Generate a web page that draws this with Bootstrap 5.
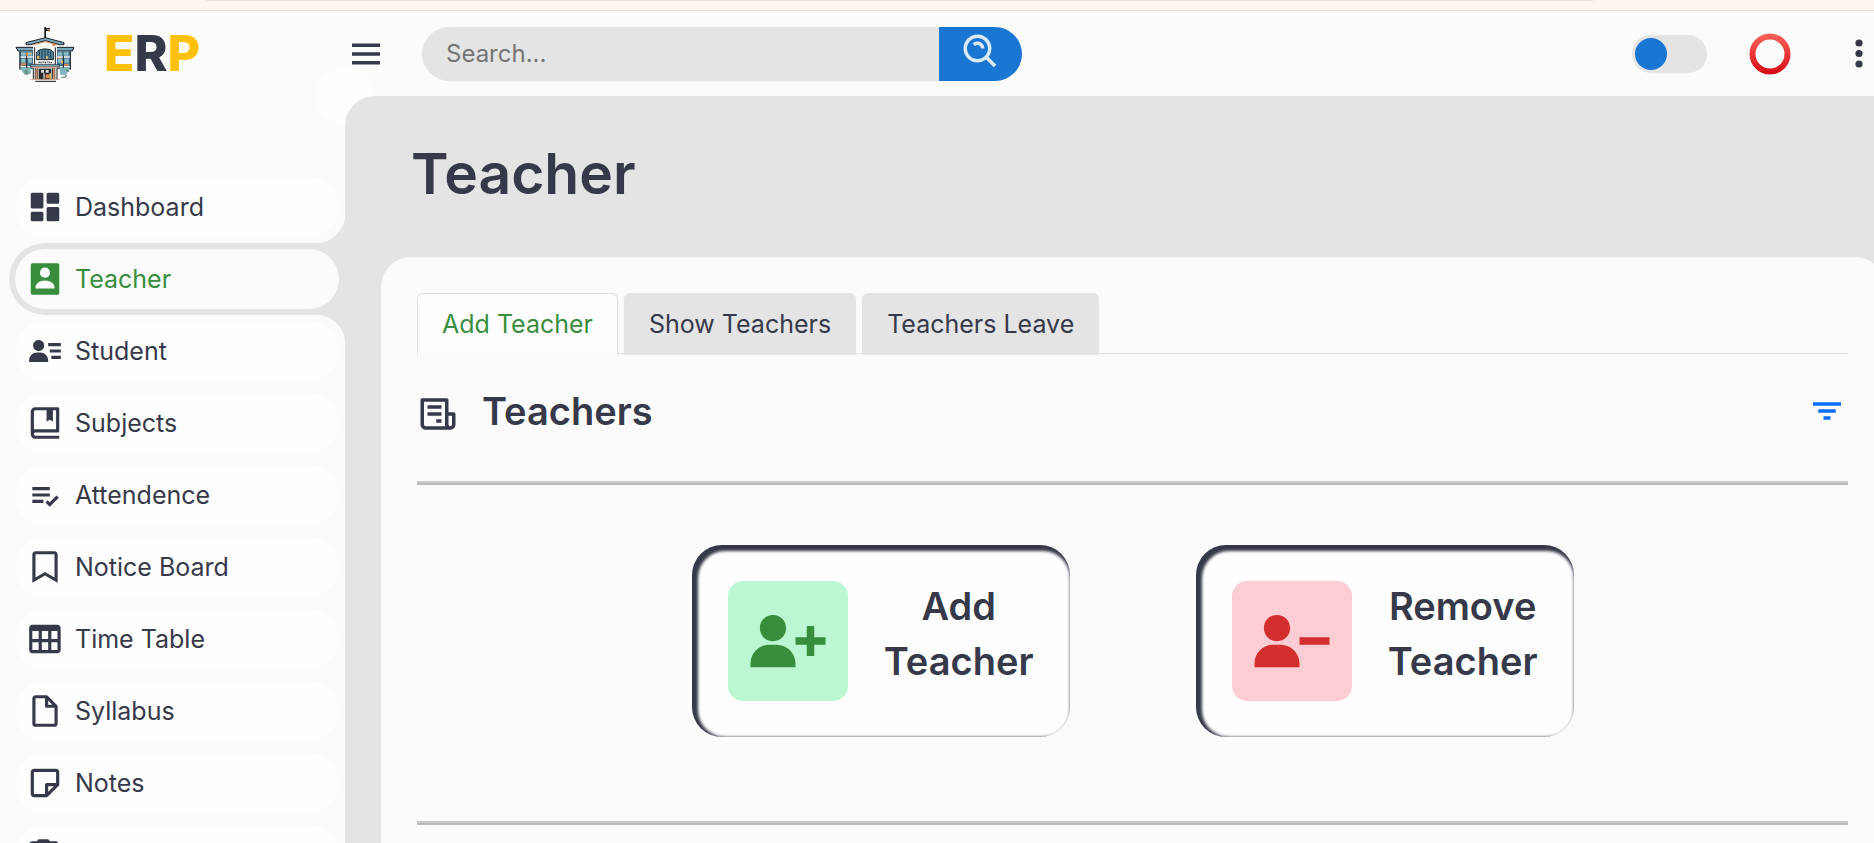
<!DOCTYPE html>
<html lang="en">
<head>
<meta charset="utf-8">
<meta name="viewport" content="width=device-width, initial-scale=1">
<title>ERP - Teacher</title>
<link href="https://cdn.jsdelivr.net/npm/bootstrap@5.3.0/dist/css/bootstrap.min.css" rel="stylesheet">
<style>
:root { --ink: #363949; --panel: #fbfbfb; --canvas: #e4e4e4; --go: #388e3c; --stop: #d32f2f; --blue: #1976d2; }
body { font-family: Inter, "Open Sans", sans-serif; font-size: 25px; line-height: 36px; color: var(--ink); background: var(--panel); }
svg { fill: currentColor; display: block; }
.top-strip { height: 11px; background: #fff6f2; border-bottom: 1px solid #f3dfd0; }
.top-strip hr { width: 74%; height: 1px; margin: 0 0 0 11%; border: 0; background: #eee0dd; opacity: 1; }
.icon-m { width: 38px; height: 38px; flex: none; }
.icon-l { width: 42px; height: 42px; flex: none; }

.sidebar { width: 345px; background: var(--panel); }
.brand { height: 85px; padding: 0 0 2px 10px; gap: 24px; color: var(--ink); }
.brand-name { font-size: 50px; font-weight: 800; line-height: 60px; }
.brand-name span { color: #ffc107; }
.side-menu { margin-top: 75px; }
.side-item { position: relative; height: 72px; margin-left: 9px; padding: 6px; border-radius: 36px 0 0 36px; }
.side-item a { height: 60px; padding-left: 11px; gap: 11px; border-radius: 30px; background: #fefefe; color: var(--ink); }
.side-item.current { background: var(--canvas); }
.side-item.current a { background: var(--panel); color: var(--go); }
/* Curved joins between the current item and the canvas */
.side-item.current::before, .side-item.current::after { content: ""; position: absolute; right: 0; width: 30px; height: 30px; }
.side-item.current::before { bottom: 100%; background: radial-gradient(circle at 0 0, transparent 30px, var(--canvas) 31px); }
.side-item.current::after { top: 100%; background: radial-gradient(circle at 0 100%, transparent 30px, var(--canvas) 31px); }

.main-area { background: var(--canvas); min-width: 0; }
.topbar { position: relative; height: 85px; background: var(--panel); padding-right: 11px; }
.topbar::before { content: ""; position: absolute; left: 0; bottom: -60px; width: 60px; height: 60px; border-radius: 50%; box-shadow: -30px -30px 0 #fdfdfd; }
.plain-btn { border: 0; padding: 0; background: none; color: inherit; }
.search-box { width: 600px; height: 54px; margin-left: 35px; }
.search-box input { border: 0; border-radius: 27px 0 0 27px; background: var(--canvas); padding: 0 24px; font-size: 24px; color: var(--ink); }
.search-box input::placeholder { color: #757575; }
.search-box button { width: 83px; border: 0; border-radius: 0 27px 27px 0; background: var(--blue); color: #dce9f7; }
.mode-switch { appearance: none; width: 75px; height: 38px; margin: 0 42px 0 0; padding: 3px; border-radius: 19px; background: var(--canvas); }
.mode-switch::before { content: ""; display: block; width: 32px; height: 32px; border-radius: 50%; background: var(--blue); }
.more-btn { margin-left: 64px; }

.page-head { padding: 48px 36px 53px 66px; }
.page-head h1 { font-size: 57px; font-weight: 600; line-height: 60px; }
.sheet { margin: 0 -11px 0 36px; padding: 36px 37px 0 36px; border-radius: 30px 30px 0 0; background: var(--panel); }
.sheet .nav-tabs { gap: 6px; height: 61px; border-bottom: 1px solid #dedfe0; }
.sheet .nav-link { height: 62px; padding: 12px 24px; border: 1px solid var(--canvas); border-radius: 6px 6px 0 0; background: var(--canvas); color: var(--ink); }
.sheet .nav-link.active { background: #fefefe; border-color: #dedfe0 #dedfe0 #fefefe; color: var(--go); }
.section-head { height: 127px; padding-bottom: 14px; gap: 23px; }
.section-head h2 { font-size: 38px; font-weight: 600; line-height: 54px; }
.section-head .sheet-icon { margin-top: 6px; }
.rule { height: 4px; margin: 0; border: 0; border-top: 2px solid #c9c9cc; background: #bababb; opacity: 1; }
.action-row { gap: 126px; padding: 60px 0 84px; }
.action-card { width: 378px; height: 192px; padding: 0 36px; border: 0; border-radius: 30px; background: #fefefe; color: var(--ink); box-shadow: inset 3px 3px 3px 3px var(--ink); }
.action-icon { width: 120px; height: 120px; border-radius: 15px; }
.action-icon svg { width: 90px; height: 90px; }
.action-icon.add { background: #bbf7d3; color: var(--go); }
.action-icon.drop { background: #fecdd3; color: var(--stop); }
.action-text { font-size: 38px; font-weight: 600; line-height: 55px; padding-bottom: 14px; }
</style>
</head>
<body class="vh-100 overflow-hidden d-flex flex-column">
<svg width="0" height="0" class="position-absolute" aria-hidden="true">
  <symbol id="i-dash" viewBox="0 0 24 24"><path d="M4 13h6a1 1 0 0 0 1-1V4a1 1 0 0 0-1-1H4a1 1 0 0 0-1 1v8a1 1 0 0 0 1 1zm-1 7a1 1 0 0 0 1 1h6a1 1 0 0 0 1-1v-4a1 1 0 0 0-1-1H4a1 1 0 0 0-1 1v4zm10 0a1 1 0 0 0 1 1h6a1 1 0 0 0 1-1v-7a1 1 0 0 0-1-1h-6a1 1 0 0 0-1 1v7zm1-10h6a1 1 0 0 0 1-1V4a1 1 0 0 0-1-1h-6a1 1 0 0 0-1 1v5a1 1 0 0 0 1 1z"/></symbol>
  <symbol id="i-teacher" viewBox="0 0 24 24"><rect x="3" y="2" width="18" height="20" rx="1.2"/><circle cx="12" cy="8" r="3.2" fill="#fff"/><path fill="#fff" d="M6 18v-.6C6 15 8.700 13 12 13s6 2 6 4.400v.6z"/></symbol>
  <symbol id="i-student" viewBox="0 0 24 24"><path d="M15 11h7v2h-7zm1 4h6v2h-6zm-2-8h8v2h-8zM4 19h10v-1c0-2.757-2.243-5-5-5H7c-2.757 0-5 2.243-5 5v1h2zm4-7c1.995 0 3.500-1.505 3.500-3.500S9.995 5 8 5 4.500 6.505 4.500 8.500 6.005 12 8 12z"/></symbol>
  <symbol id="i-book" viewBox="0 0 24 24"><path d="M20 2H6C4.300 2 3 3.300 3 5v14c0 1.700 1.300 3 3 3h15v-2H6c-.6 0-1-.4-1-1s.4-1 1-1h14a1 1 0 0 0 1-1V3a1 1 0 0 0-1-1zm-1 14H5V5c0-.6.4-1 1-1h7v7l2-1 2 1V4h2z"/></symbol>
  <symbol id="i-check" viewBox="0 0 24 24"><path d="M4 7h11v2H4zm0 4h11v2H4zm0 4h7v2H4zm15.299-2.708-4.300 4.291-1.292-1.291-1.414 1.415 2.706 2.704 5.712-5.703z"/></symbol>
  <symbol id="i-mark" viewBox="0 0 24 24"><path d="M18 2H6c-1.103 0-2 .897-2 2v18l8-4.572L20 22V4c0-1.103-.897-2-2-2zm0 16.553-6-3.428-6 3.428V4h12v14.553z"/></symbol>
  <symbol id="i-table" viewBox="0 0 24 24"><path d="M4 21h15.893c1.103 0 2-.897 2-2V5c0-1.103-.897-2-2-2H4c-1.103 0-2 .897-2 2v14c0 1.103.897 2 2 2zm0-2v-5h4v5H4zM14 7v5h-4V7h4zM8 7v5H4V7h4zm2 12v-5h4v5h-4zm6 0v-5h3.894v5H16zm3.893-7H16V7h3.893v5z"/></symbol>
  <symbol id="i-file" viewBox="0 0 24 24"><path d="M19.708 8.293l-6-6A1 1 0 0 0 13 2H6c-1.103 0-2 .897-2 2v16c0 1.103.897 2 2 2h12c1.103 0 2-.897 2-2V9a1 1 0 0 0-.292-.707zM16.586 8H14V5.414L16.586 8zM6 20V4h6v5a1 1 0 0 0 1 1h5v10H6z"/></symbol>
  <symbol id="i-note" viewBox="0 0 24 24"><path d="M19 3H5c-1.100 0-2 .9-2 2v14c0 1.100.9 2 2 2h8a1 1 0 0 0 .71-.29l7-7A1 1 0 0 0 21 13V5c0-1.100-.9-2-2-2zM5 5h14v7h-6a1 1 0 0 0-1 1v6H5zm9 12.590V14h3.590z"/></symbol>
  <symbol id="i-clip" viewBox="0 0 24 24"><path d="M19 3.300h-4A1.500 1.500 0 0 0 13.500 2h-5A1.500 1.500 0 0 0 7 3.300H4c-1 0-1.800.7-1.800 1.700v15c0 1.100.9 2 2 2h14c1.100 0 2-.9 2-2V5c0-1-.4-1.700-1.200-1.700zM18 20H4.500V7H18z"/></symbol>
</svg>

<div class="top-strip flex-shrink-0"><hr></div>
<div class="d-flex flex-grow-1 overflow-hidden">

  <aside class="sidebar flex-shrink-0">
    <a href="#" class="brand d-flex align-items-center text-decoration-none">
      <svg width="70" height="66" viewBox="0 0 210 198" role="img" aria-label="School">
        <path d="M26 82h158v74l-30 24H56l-30-24z" fill="#fff"/>
        <path d="M103 21h5v34h-5z" fill="#151515"/><path d="M108 24h12v9h-12z" fill="#222"/><path d="M111 27h5v3h-5z" fill="#8fc1d0"/><path d="M116 28h4v7h-4z" fill="#e8894e"/>
        <path d="M18 82h56l-4 11H24zM136 82h56l-5 11h-51z" fill="#79a8bb" stroke="#191b20" stroke-width="3"/>
        <path d="M28 94h46v54H28zM137 94h46v54h-46z" fill="#4c7d96"/>
        <path d="M33 97h14v10H33zM53 97h13v10H53zM143 97h13v10h-13zM162 97h14v10h-14zM33 116h13v12H33zM54 116h12v12H54zM144 116h13v12h-13zM164 116h12v12h-12z" fill="#86bac4"/>
        <path d="M48 98h6v16h-6zM143 112h12v4h-12zM33 130h15v5H33zM162 132h14v5h-14z" fill="#e08a4d"/>
        <path d="M31 136h6v14h-6zM55 99h7v4h-7zM154 121h5v10h-5zM162 146h7v12h-7z" fill="#eac466"/>
        <path d="M30 109h42v4H30zM138 109h43v4h-43z" fill="#f3f3f3"/>
        <path d="M30 138h42v4H30zM138 138h43v4h-43z" fill="#eee"/>
        <path d="M28 142h34v20H42zM150 142h32l-14 22h-18z" fill="#7fb4be"/><path d="M44 150h10v14H44zM170 148h7v8h-7z" fill="#68927d"/>
        <path d="M30 94v55M181 94v55M70 94v50M140 94v50M50 107v37M160 107v37" stroke="#1b1d24" stroke-width="3" fill="none"/>
        <path d="M69 60h72v85H69z" fill="#fdfdfd"/>
        <path d="M106 53 48 68v6h14l44-12 42 12h14v-6z" fill="#79a8bb" stroke="#191b20" stroke-width="3"/>
        <path d="M70 74l36-9 35 9" stroke="#d98657" stroke-width="3" fill="none"/><path d="M128 72h8v6h-8z" fill="#e78549"/>
        <path d="M80 119V96c8-12 43-12 50 0v23z" fill="#548fa4" stroke="#20232a" stroke-width="3"/>
        <path d="M88 92v24M96 88v28M105 86v30M114 88v28M122 92v24" stroke="#25313a" stroke-width="3"/>
        <path d="M82 108h6v9h-6zM108 108h5v9h-5z" fill="#eac466"/>
        <path d="M74 82v54M136 82v54" stroke="#1b1d24" stroke-width="3"/>
        <path d="M83 122h45v10H83z" fill="#fff"/><path d="M85 127h5m3-2v5m4-4h6m3-1v5m4-4h5m3-1v5m4-2h4" stroke="#252525" stroke-width="3"/>
        <path d="M62 133h86v8H62z" fill="#7ca7bb" stroke="#1b1d24" stroke-width="2"/><path d="M65 140h80v3H65z" fill="#d7835a"/>
        <path d="M68 143h74v35H68z" fill="#e8e5df"/>
        <path d="M70 144v34M76 144v34M82 144v34M128 144v34M134 144v34M141 144v34" stroke="#282a30" stroke-width="3"/>
        <path d="M77 144h5v32h-5zM129 144h5v32h-5z" fill="#d99162"/>
        <path d="M86 146h38v32H86z" fill="#252a31"/><path d="M93 150h9v8h-9zM107 150h9v8h-9zM100 160h4v16h-4z" fill="#d8dddc"/><path d="M107 163h10v12h-10z" fill="#e08a4d"/><path d="M118 160h5v16h-5z" fill="#eac466"/>
        <path d="M60 178h90" stroke="#d28a63" stroke-width="2"/><path d="M154 172h10l6-7" stroke="#68927d" stroke-width="4" fill="none"/>
        <path d="M76 184h62" stroke="#15161a" stroke-width="3"/>
      </svg>
      <div class="brand-name"><span>E</span>R<span>P</span></div>
    </a>
    <ul class="side-menu list-unstyled">
      <li class="side-item"><a href="#" class="d-flex align-items-center text-decoration-none"><svg class="icon-m"><use href="#i-dash"/></svg>Dashboard</a></li>
      <li class="side-item current"><a href="#" aria-current="page" class="d-flex align-items-center text-decoration-none"><svg class="icon-m"><use href="#i-teacher"/></svg>Teacher</a></li>
      <li class="side-item"><a href="#" class="d-flex align-items-center text-decoration-none"><svg class="icon-m"><use href="#i-student"/></svg>Student</a></li>
      <li class="side-item"><a href="#" class="d-flex align-items-center text-decoration-none"><svg class="icon-m"><use href="#i-book"/></svg>Subjects</a></li>
      <li class="side-item"><a href="#" class="d-flex align-items-center text-decoration-none"><svg class="icon-m"><use href="#i-check"/></svg>Attendence</a></li>
      <li class="side-item"><a href="#" class="d-flex align-items-center text-decoration-none"><svg class="icon-m"><use href="#i-mark"/></svg>Notice Board</a></li>
      <li class="side-item"><a href="#" class="d-flex align-items-center text-decoration-none"><svg class="icon-m"><use href="#i-table"/></svg>Time Table</a></li>
      <li class="side-item"><a href="#" class="d-flex align-items-center text-decoration-none"><svg class="icon-m"><use href="#i-file"/></svg>Syllabus</a></li>
      <li class="side-item"><a href="#" class="d-flex align-items-center text-decoration-none"><svg class="icon-m"><use href="#i-note"/></svg>Notes</a></li>
      <li class="side-item"><a href="#" aria-label="Assignments" class="d-flex align-items-center text-decoration-none"><svg class="icon-m"><use href="#i-clip"/></svg></a></li>
    </ul>
  </aside>

  <section class="main-area flex-grow-1 d-flex flex-column">
    <nav class="topbar d-flex align-items-center flex-shrink-0">
      <button type="button" class="plain-btn" aria-label="Toggle menu"><svg class="icon-l" viewBox="0 0 24 24"><path d="M4 6h16v2H4zm0 5h16v2H4zm0 5h16v2H4z"/></svg></button>
      <form class="search-box d-flex">
        <input type="search" class="flex-grow-1 w-100" placeholder="Search..." aria-label="Search">
        <button type="button" class="d-flex justify-content-center flex-shrink-0 pt-1" aria-label="Submit search"><svg class="icon-l" viewBox="0 0 24 24"><path d="M10 18a7.952 7.952 0 0 0 4.897-1.688l4.396 4.396 1.414-1.414-4.396-4.396A7.952 7.952 0 0 0 18 10c0-4.411-3.589-8-8-8s-8 3.589-8 8 3.589 8 8 8zm0-14c3.309 0 6 2.691 6 6s-2.691 6-6 6-6-2.691-6-6 2.691-6 6-6z"/><path d="M11.412 8.586c.379.38.588.882.588 1.414h2a3.977 3.977 0 0 0-1.174-2.828c-1.514-1.512-4.139-1.511-5.652 0l1.412 1.416c.76-.758 2.070-.756 2.826-.002z"/></svg></button>
      </form>
      <input type="checkbox" role="switch" class="mode-switch ms-auto" aria-label="Dark mode">
      <a href="#" aria-label="Profile"><svg width="42" height="42" viewBox="0 0 42 42"><defs><linearGradient id="ring" x1="0" y1="0" x2="0" y2="1"><stop offset="0" stop-color="#f95d55"/><stop offset="1" stop-color="#d8101a"/></linearGradient></defs><circle cx="21" cy="21" r="17.500" fill="none" stroke="url(#ring)" stroke-width="6"/></svg></a>
      <button type="button" class="plain-btn more-btn" aria-label="More"><svg width="8" height="42" viewBox="0 0 8 42"><circle cx="4" cy="10" r="3.600"/><circle cx="4" cy="20.500" r="3.600"/><circle cx="4" cy="31" r="3.600"/></svg></button>
    </nav>

    <header class="page-head"><h1 class="m-0">Teacher</h1></header>

    <main class="sheet flex-grow-1">
      <ul class="nav nav-tabs">
        <li class="nav-item"><a class="nav-link active" href="#" aria-current="page">Add Teacher</a></li>
        <li class="nav-item"><a class="nav-link" href="#">Show Teachers</a></li>
        <li class="nav-item"><a class="nav-link" href="#">Teachers Leave</a></li>
      </ul>
      <div class="section-head d-flex align-items-center">
        <svg class="icon-l sheet-icon" viewBox="0 0 24 24"><path d="M21 11h-3V4a1 1 0 0 0-1-1H3a1 1 0 0 0-1 1v14c0 1.654 1.346 3 3 3h14c1.654 0 3-1.346 3-3v-6a1 1 0 0 0-1-1zM5 19a1 1 0 0 1-1-1V5h12v13c0 .351.061.688.171 1H5zm15-1a1 1 0 0 1-2 0v-5h2v5z"/><path d="M6 7h8v2H6zm0 4h8v2H6zm5 4h3v2h-3z"/></svg>
        <h2 class="m-0">Teachers</h2>
        <a href="#" class="ms-auto text-primary" aria-label="Filter"><svg class="icon-l" viewBox="0 0 24 24"><path d="M7 11h10v2H7zM4 7h16v2H4zm6 8h4v2h-4z"/></svg></a>
      </div>
      <hr class="rule">
      <div class="action-row d-flex justify-content-center">
        <button type="button" class="action-card d-flex align-items-center justify-content-between">
          <span class="action-icon add d-flex align-items-center justify-content-center"><svg viewBox="0 0 24 24"><path d="M4.500 8.552c0 1.995 1.505 3.500 3.500 3.500s3.500-1.505 3.500-3.500-1.505-3.500-3.500-3.500-3.500 1.505-3.500 3.500zM19 8h-2v3h-3v2h3v3h2v-3h3v-2h-3zM4 19h10v-1c0-2.757-2.243-5-5-5H7c-2.757 0-5 2.243-5 5v1h2z"/></svg></span>
          <span class="action-text">Add<br>Teacher</span>
        </button>
        <button type="button" class="action-card d-flex align-items-center justify-content-between">
          <span class="action-icon drop d-flex align-items-center justify-content-center"><svg viewBox="0 0 24 24"><path d="M4.500 8.552c0 1.995 1.505 3.500 3.500 3.500s3.500-1.505 3.500-3.500-1.505-3.500-3.500-3.500-3.500 1.505-3.500 3.500zM14 11h8v2h-8zM4 19h10v-1c0-2.757-2.243-5-5-5H7c-2.757 0-5 2.243-5 5v1h2z"/></svg></span>
          <span class="action-text">Remove<br>Teacher</span>
        </button>
      </div>
      <hr class="rule">
    </main>
  </section>
</div>
<script src="https://cdn.jsdelivr.net/npm/bootstrap@5.3.0/dist/js/bootstrap.bundle.min.js"></script>
</body>
</html>
